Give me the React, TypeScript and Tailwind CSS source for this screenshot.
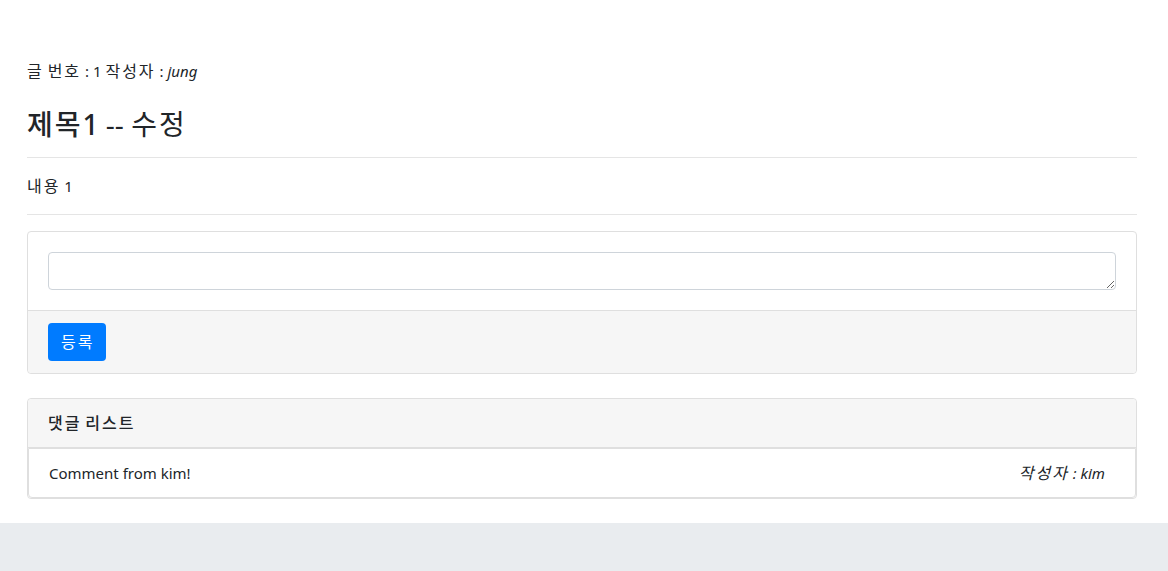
import React from "react";

const K: React.FC<{ children: React.ReactNode; big?: boolean }> = ({ children, big }) => (
  <span
    className={
      big
        ? "font-['Noto_Sans_CJK_KR',sans-serif] text-[28px] leading-none tracking-[2px]"
        : "font-['Noto_Sans_CJK_KR',sans-serif] text-[16px] leading-none tracking-[2px]"
    }
  >
    {children}
  </span>
);

export default function App() {
  return (
    <div className="min-h-screen bg-[#e9ecef] text-[#212529] font-['Noto_Sans','Noto_Sans_CJK_KR',sans-serif] text-[15px]">
      <div className="bg-white pt-[59px] pb-[24px]">
        <div className="ml-[27px] w-[1110px]">
          <p className="h-[24px] leading-[24px] mb-6">
            <K>글</K> <K>번호</K> : 1 <K>작성자</K> : <i>jung</i>
          </p>
          <h3 className="h-[34px] text-[28px] leading-[34px] mb-4">
            <span className="font-medium">
              <K big>제목</K>1
            </span>{" "}
            -- <K big>수정</K>
          </h3>
          <hr className="border-t border-[#e5e5e5] mb-4" />
          <p className="h-[24px] leading-[24px] mb-4">
            <K>내용</K> 1
          </p>
          <hr className="border-t border-[#e5e5e5] mb-4" />

          <div className="border border-[#dfdfdf] rounded-[4px]">
            <div className="px-5 py-5">
              <textarea
                className="block w-full h-[38px] border border-[#ced4da] rounded-[4px] px-3 py-1.5 text-[16px] outline-none"
                rows={1}
              />
            </div>
            <div className="bg-[#f6f6f6] border-t border-[#dfdfdf] px-5 py-3 rounded-b-[4px]">
              <button className="bg-[#007bff] text-white h-[38px] pl-[13px] pr-[12px] rounded-[4px]">
                <K>등록</K>
              </button>
            </div>
          </div>

          <div className="mt-6 border border-[#dfdfdf] rounded-[4px]">
            <div className="h-[49px] bg-[#f6f6f6] border-b border-[#dfdfdf] px-5 py-3 leading-[24px] font-medium rounded-t-[4px]">
              <K>댓글</K> <K>리스트</K>
            </div>
            <div className="h-[50px] flex justify-between border border-[#dfdfdf] rounded-b-[4px] pl-5 pr-[30px] py-3 leading-[24px]">
              <span>Comment from kim!</span>
              <i>
                <K>작성자</K> : kim
              </i>
            </div>
          </div>
        </div>
      </div>
    </div>
  );
}
